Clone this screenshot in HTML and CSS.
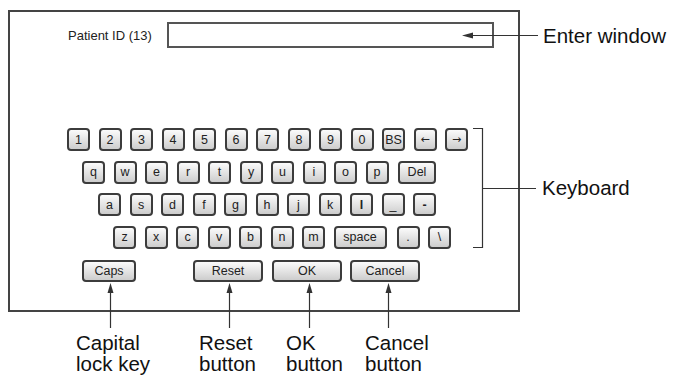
FILE: index.html
```html
<!DOCTYPE html>
<html lang="en">
<head>
    <meta charset="UTF-8">
    <meta name="viewport" content="width=device-width, initial-scale=1.0">
    <title>Keyboard entry screen</title>
    <link rel="stylesheet" href="styles.css">
</head>
<body>
    <div class="figure">
        <div class="screen">
            <div class="entry">
                <span class="entry-label">Patient ID (13)</span>
                <div class="entry-box"></div>
            </div>

            <div class="keyboard">
                <div class="key-row row1">
                    <span class="key">1</span><span class="key">2</span><span class="key">3</span><span class="key">4</span><span class="key">5</span><span class="key">6</span><span class="key">7</span><span class="key">8</span><span class="key">9</span><span class="key">0</span><span class="key">BS</span><span class="key arrow">&larr;</span><span class="key arrow">&rarr;</span>
                </div>
                <div class="key-row row2">
                    <span class="key">q</span><span class="key">w</span><span class="key">e</span><span class="key">r</span><span class="key">t</span><span class="key">y</span><span class="key">u</span><span class="key">i</span><span class="key">o</span><span class="key">p</span><span class="key key-del">Del</span>
                </div>
                <div class="key-row row3">
                    <span class="key">a</span><span class="key">s</span><span class="key">d</span><span class="key">f</span><span class="key">g</span><span class="key">h</span><span class="key">j</span><span class="key">k</span><span class="key bold">l</span><span class="key">_</span><span class="key bold">-</span>
                </div>
                <div class="key-row row4">
                    <span class="key">z</span><span class="key">x</span><span class="key">c</span><span class="key">v</span><span class="key">b</span><span class="key">n</span><span class="key">m</span><span class="key key-space">space</span><span class="key">.</span><span class="key">\</span>
                </div>
            </div>

            <div class="actions">
                <span class="key btn btn-caps">Caps</span>
                <span class="key btn btn-reset">Reset</span>
                <span class="key btn btn-ok">OK</span>
                <span class="key btn btn-cancel">Cancel</span>
            </div>
        </div>

        <svg class="callouts" width="674" height="376" viewBox="0 0 674 376">
            <g stroke="#333" stroke-width="1.2" fill="none">
                <line x1="468" y1="35.5" x2="538" y2="35.5"/>
                <path d="M473 128.5 H482.5 V247.5 H473"/>
                <line x1="482" y1="188.5" x2="536" y2="188.5"/>
                <line x1="110.5" y1="290" x2="110.5" y2="328"/>
                <line x1="229.5" y1="290" x2="229.5" y2="328"/>
                <line x1="309.5" y1="290" x2="309.5" y2="328"/>
                <line x1="388.5" y1="290" x2="388.5" y2="328"/>
            </g>
            <g fill="#333">
                <polygon points="462,35.5 473,32.5 473,38.5"/>
                <polygon points="110.5,283 107.5,293 113.5,293"/>
                <polygon points="229.5,283 226.5,293 232.5,293"/>
                <polygon points="309.5,283 306.5,293 312.5,293"/>
                <polygon points="388.5,283 385.5,293 391.5,293"/>
            </g>
        </svg>

        <div class="label label-enter">Enter window</div>
        <div class="label label-keyboard">Keyboard</div>
        <div class="label label-caps">Capital<br>lock key</div>
        <div class="label label-reset">Reset<br>button</div>
        <div class="label label-ok">OK<br>button</div>
        <div class="label label-cancel">Cancel<br>button</div>
    </div>
</body>
</html>
```

FILE: styles.css
```css
body {
    margin: 0;
    background: white;
    font-family: 'Liberation Sans', Arial, sans-serif;
    color: #111;
}
.figure {
    position: relative;
    width: 674px;
    height: 376px;
    overflow: hidden;
}
.screen {
    box-sizing: border-box;
    width: 512px;
    height: 302px;
    margin: 10px 0 0 8px;
    border: 2px solid #444;
    display: flex;
    flex-direction: column;
}
.entry {
    display: flex;
    align-items: center;
    margin-top: 10px;
    padding-left: 58px;
}
.entry-label {
    width: 99px;
    font-size: 13px;
    color: #222;
}
.entry-box {
    box-sizing: border-box;
    width: 327px;
    height: 26px;
    border: 2px solid #555;
}
.keyboard {
    display: flex;
    flex-direction: column;
    gap: 9.5px;
    margin-top: 80px;
}
.key-row {
    display: flex;
    gap: 8.5px;
}
.row1 { padding-left: 57px; }
.row2 { padding-left: 72px; }
.row3 { padding-left: 88px; }
.row4 { padding-left: 103px; }
.key {
    box-sizing: border-box;
    width: 23px;
    height: 23px;
    border: 2px solid #3c3c3c;
    border-radius: 4px;
    background: linear-gradient(#fbfbfb, #cdcdcd);
    display: flex;
    align-items: center;
    justify-content: center;
    font-size: 12.5px;
    color: #222;
}
.key.arrow {
    font-family: 'DejaVu Sans', sans-serif;
    font-size: 11px;
}
.key.bold {
    font-weight: bold;
}
.key-del { width: 38px; margin-left: 1px; }
.key-space { width: 53px; }
.key-space + .key { margin-left: 1.5px; }
.actions {
    display: flex;
    margin-top: 11.5px;
}
.btn {
    height: 22px;
    width: 70px;
}
.btn-caps { width: 54px; margin-left: 72px; }
.btn-reset { margin-left: 57px; }
.btn-ok { margin-left: 9px; }
.btn-cancel { margin-left: 8px; }
.callouts {
    position: absolute;
    left: 0;
    top: 0;
}
.label {
    position: absolute;
    font-size: 20.5px;
    line-height: 21px;
    color: #111;
}
.label-enter { left: 543px; top: 25px; }
.label-keyboard { left: 542px; top: 177px; }
.label-caps { left: 76px; top: 332px; }
.label-reset { left: 199px; top: 332px; }
.label-ok { left: 286px; top: 332px; }
.label-cancel { left: 365px; top: 332px; }
```
